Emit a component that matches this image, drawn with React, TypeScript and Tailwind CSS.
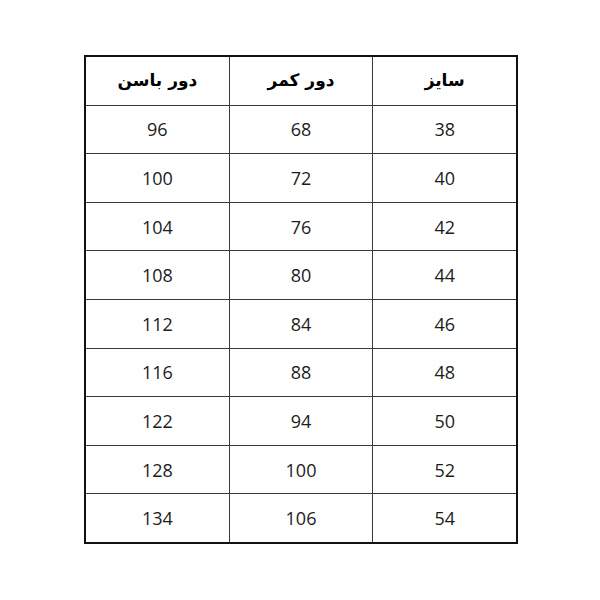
import React from "react";

const rows = [
  ["38", "68", "96"],
  ["40", "72", "100"],
  ["42", "76", "104"],
  ["44", "80", "108"],
  ["46", "84", "112"],
  ["48", "88", "116"],
  ["50", "94", "122"],
  ["52", "100", "128"],
  ["54", "106", "134"],
];

const headers = ["سایز", "دور کمر", "دور باسن"];

const App = () => {
  return (
    <div className="h-[600px] w-[600px] bg-white pl-[84px] pt-[55px]">
      {/* size chart, columns read right to left */}
      <div
        dir="rtl"
        className="grid h-[489px] w-[434px] grid-cols-3 grid-rows-10 gap-px border-2 border-[#111] bg-[#3a3a3a] font-['Open_Sans',sans-serif] text-[18px] text-[#1c1c1c]"
      >
        {headers.map((h) => (
          <div
            key={h}
            className="flex items-center justify-center bg-white font-['DejaVu_Sans',sans-serif] text-[17px] font-bold text-black"
          >
            {h}
          </div>
        ))}
        {rows.map((r, i) =>
          r.map((v, j) => (
            <div key={i + "-" + j} className="flex items-center justify-center bg-white pt-px">
              {v}
            </div>
          ))
        )}
      </div>
    </div>
  );
};

export default App;
